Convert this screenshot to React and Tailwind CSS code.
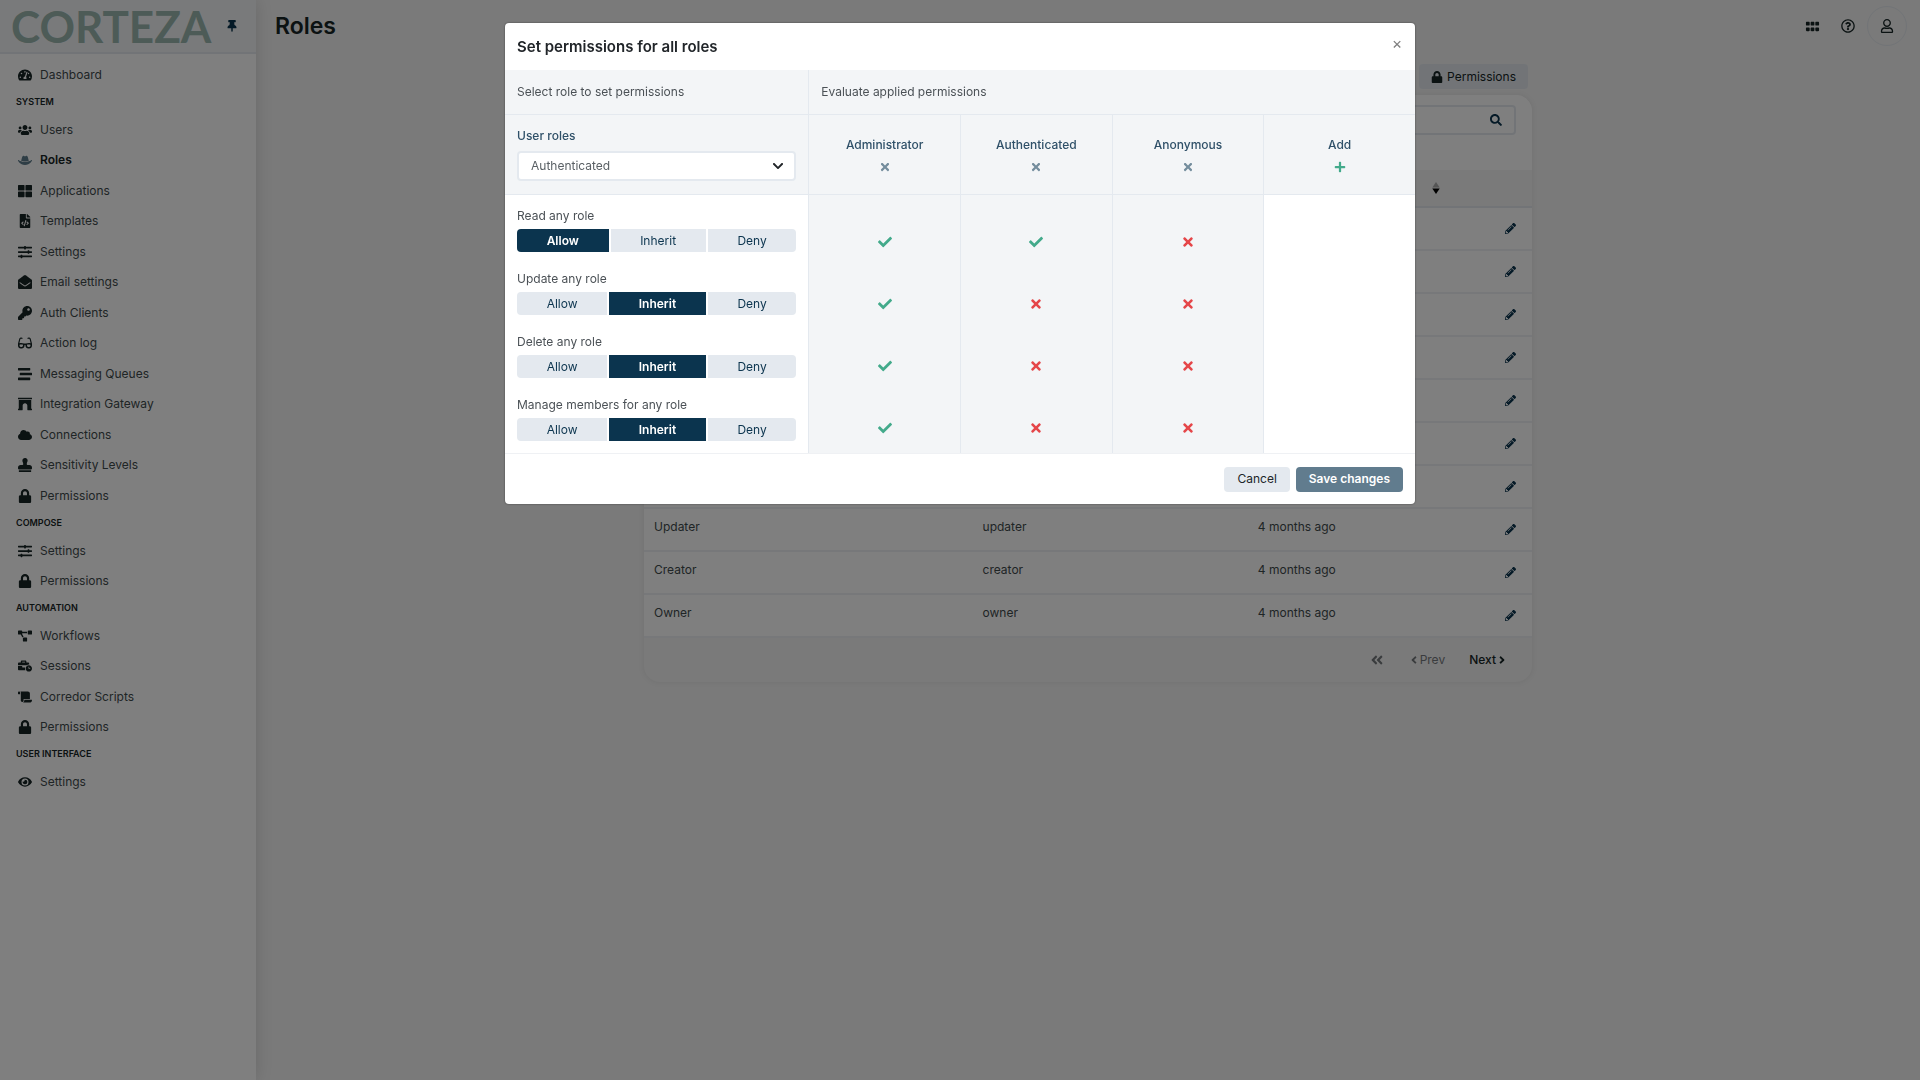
import React, { useState } from 'react';
import {
  FaTachometerAlt, FaUsers, FaHatCowboy, FaThLarge, FaFileCode, FaSlidersH, FaEnvelopeOpen, FaKey,
  FaGlasses, FaStream, FaArchway, FaCloud, FaStamp, FaLock, FaProjectDiagram, FaBusinessTime, FaScroll,
  FaEye, FaThumbtack, FaGripHorizontal, FaRegQuestionCircle, FaRegUser, FaSearch, FaPencilAlt,
  FaAngleDoubleLeft, FaAngleLeft, FaAngleRight, FaCheck, FaTimes, FaPlus, FaChevronDown,
} from 'react-icons/fa';

const NAV = [
  { title: null, items: [['Dashboard', FaTachometerAlt]] },
  {
    title: 'System',
    items: [
      ['Users', FaUsers], ['Roles', FaHatCowboy], ['Applications', FaThLarge], ['Templates', FaFileCode],
      ['Settings', FaSlidersH], ['Email settings', FaEnvelopeOpen], ['Auth Clients', FaKey],
      ['Action log', FaGlasses], ['Messaging Queues', FaStream], ['Integration Gateway', FaArchway],
      ['Connections', FaCloud], ['Sensitivity Levels', FaStamp], ['Permissions', FaLock],
    ],
  },
  { title: 'Compose', items: [['Settings', FaSlidersH], ['Permissions', FaLock]] },
  {
    title: 'Automation',
    items: [
      ['Workflows', FaProjectDiagram], ['Sessions', FaBusinessTime], ['Corredor Scripts', FaScroll],
      ['Permissions', FaLock],
    ],
  },
  { title: 'User interface', items: [['Settings', FaEye]] },
];

const ROWS = [
  ...Array.from({ length: 7 }, () => ['', '', '']),
  ['Updater', 'updater', '4 months ago'],
  ['Creator', 'creator', '4 months ago'],
  ['Owner', 'owner', '4 months ago'],
];

const RULES = ['Read any role', 'Update any role', 'Delete any role', 'Manage members for any role'];

const EVALUATED = [
  { name: 'Administrator', access: [true, true, true, true] },
  { name: 'Authenticated', access: [true, false, false, false] },
  { name: 'Anonymous', access: [false, false, false, false] },
];

function Sidebar() {
  return (
    <aside className="z-10 flex w-64 shrink-0 flex-col bg-white shadow-[0_0_16px_rgba(0,0,0,0.14)]">
      <div className="flex h-[54px] items-center border-b-2 border-[#e4e9ef] bg-[#f3f5f7] pl-[11px]">
        <span className="w-[215px] font-['Lato',sans-serif] text-[44px] leading-[52px] font-bold text-[#9ab6ae]">CORTEZA</span>
        <button type="button" aria-label="Pin sidebar" className="text-[#0b344e]">
          <FaThumbtack className="size-3" />
        </button>
      </div>
      <nav className="pt-[5px]">
        {NAV.map((group) => (
          <section key={group.title ?? 'home'}>
            {group.title && (
              <h2 className="flex h-6 items-center pl-4 text-[9px] font-semibold text-[#162425] uppercase">{group.title}</h2>
            )}
            <ul>
              {group.items.map(([label, Icon]) => {
                const active = label === 'Roles';
                return (
                  <li key={label} className="h-[31px] even:h-[30px]">
                    <a href="#" className={active ? 'flex h-full items-center gap-2 pl-[17px] font-semibold text-[#162425]' : 'flex h-full items-center gap-2 pl-[17px] text-[#3f4a4c]'}>
                      <span className={active ? 'flex w-[15px] justify-center text-[#5e7d8c]' : 'flex w-[15px] justify-center text-[#162425]'}>
                        <Icon className="size-3.5" />
                      </span>
                      {label}
                    </a>
                  </li>
                );
              })}
            </ul>
          </section>
        ))}
      </nav>
    </aside>
  );
}

function RolesPage() {
  return (
    <main className="flex grow flex-col bg-[#f4f4f4]">
      <header className="flex h-[52px] items-center justify-between pr-[13px] pl-[19px]">
        <h1 className="text-[23px] font-semibold text-[#162425]">Roles</h1>
        <div className="flex items-center text-[#162425]">
          <button type="button" aria-label="Applications" className="flex w-9 justify-center">
            <FaGripHorizontal className="size-[15px]" />
          </button>
          <button type="button" aria-label="Help" className="mr-px flex w-9 justify-center">
            <FaRegQuestionCircle className="size-3.5" />
          </button>
          <button type="button" aria-label="Profile" className="flex size-10 items-center justify-center rounded-full border border-[#e4e9ef]">
            <FaRegUser className="size-3.5" />
          </button>
        </div>
      </header>
      <div className="mx-auto w-full max-w-[888px] pt-3">
        <div className="mb-1.5 flex justify-end pr-1">
          <button type="button" className="flex h-[25px] items-center gap-1 rounded-sm bg-[#e4e9ef] px-3 text-[#162425]">
            <FaLock className="size-3" />
            Permissions
          </button>
        </div>
        <section className="overflow-hidden rounded-2xl bg-[#f4f4f4] shadow-[0_0_6px_rgba(0,0,0,0.08)]">
          <div className="flex h-[75px] justify-end bg-white px-4 pt-2.5">
            <label className="flex h-[30px] w-72 items-center justify-between rounded-sm border-2 border-[#e4e9ef] pr-3">
              <input type="search" aria-label="Search roles" className="w-full px-3 outline-none" />
              <FaSearch className="size-3 shrink-0 text-[#0b344e]" />
            </label>
          </div>
          <table className="w-full table-fixed bg-white text-left">
            <colgroup>
              <col className="w-[37%]" />
              <col className="w-[31%]" />
              <col />
              <col className="w-16" />
            </colgroup>
            <thead>
              <tr className="h-[37px] border-b-2 border-[#e4e9ef] bg-[#f4f4f4]">
                <th />
                <th />
                <th className="pr-7">
                  <button type="button" aria-label="Sort by date" className="ml-auto flex">
                    <svg viewBox="0 0 8 13" className="h-3 w-2">
                      <path d="M4 0 8 6H0z" fill="#000" opacity="0.3" />
                      <path d="M4 13 8 7H0z" fill="#000" />
                    </svg>
                  </button>
                </th>
                <th />
              </tr>
            </thead>
            <tbody>
              {ROWS.map((row, i) => (
                <tr key={i} className="h-[43px] border-b-2 border-[#eef1f5] text-[#3f4a4c]">
                  {row.map((cell, j) => (
                    <td key={j} className="px-2.5 pb-1.5">{cell}</td>
                  ))}
                  <td className="pr-4">
                    <button type="button" aria-label="Edit role" className="ml-auto flex text-[#0b344e]">
                      <FaPencilAlt className="size-[11px]" />
                    </button>
                  </td>
                </tr>
              ))}
            </tbody>
          </table>
          <footer className="flex h-11 items-center justify-end gap-6 pr-6">
            <button type="button" aria-label="First page" disabled className="text-[#74797c]">
              <FaAngleDoubleLeft className="size-3.5" />
            </button>
            <button type="button" disabled className="flex items-center text-[#74797c]">
              <FaAngleLeft className="size-3" />
              Prev
            </button>
            <button type="button" className="flex items-center font-medium text-[#162425]">
              Next
              <FaAngleRight className="size-3" />
            </button>
          </footer>
        </section>
      </div>
    </main>
  );
}

function AccessToggle({ label, value, onChange }) {
  return (
    <fieldset>
      <legend className="mb-1 leading-[18px]">{label}</legend>
      <div className="flex gap-0.5 overflow-hidden rounded-sm">
        {['Allow', 'Inherit', 'Deny'].map((option) => (
          <button
            key={option}
            type="button"
            aria-pressed={value === option}
            onClick={() => onChange(option)}
            className={value === option
              ? 'h-[23px] flex-auto bg-[#0b344e] text-center font-semibold text-white'
              : 'h-[23px] flex-auto bg-[#e4e9ef] text-center text-[#0b344e]'}
          >
            {option}
          </button>
        ))}
      </div>
    </fieldset>
  );
}

function PermissionsModal() {
  const [values, setValues] = useState(['Allow', 'Inherit', 'Inherit', 'Inherit']);
  return (
    <div className="fixed inset-0 z-20 flex items-start justify-center bg-black/50 pt-[23px]">
      <div role="dialog" aria-labelledby="modal-title" className="w-full max-w-[910px] overflow-hidden rounded-[4px] bg-white text-[#4b5156] shadow-[0_0_2px_rgba(0,0,0,0.5)]">
        <header className="flex h-[47px] items-center justify-between px-3">
          <h2 id="modal-title" className="text-[15px] font-semibold text-[#212529]">Set permissions for all roles</h2>
          <button type="button" aria-label="Close" className="mb-2 flex w-3 justify-center text-[16px] leading-5 text-[#808080]">×</button>
        </header>

        <div className="grid grid-cols-[2fr_4fr] border-b border-[#e4e9ef] bg-[#f3f5f7] leading-[44px]">
          <p className="px-3">Select role to set permissions</p>
          <p className="border-l border-[#e4e9ef] px-3">Evaluate applied permissions</p>
        </div>

        <div className="grid grid-cols-[2fr_1fr_1fr_1fr_1fr] border-b border-[#e4e9ef] bg-[#f3f5f7] text-[#2f5068]">
          <div className="px-3 pt-3 pb-[13px]">
            <label htmlFor="role" className="mb-1.5 block leading-[18px] font-medium">User roles</label>
            <div className="relative">
              <select id="role" className="h-[30px] w-full appearance-none rounded-sm border-2 border-[#e4e9ef] bg-white px-3 text-[#5a6065]">
                <option>Authenticated</option>
              </select>
              <FaChevronDown className="pointer-events-none absolute top-[9px] right-3 size-3 text-[#212529]" />
            </div>
          </div>
          {EVALUATED.map(({ name }) => (
            <div key={name} className="flex flex-col items-center justify-center gap-1 border-l border-[#e4e9ef] pt-0.5 font-medium">
              {name}
              <button type="button" aria-label={'Remove ' + name} className="flex h-[18px] items-center text-[#748d9d]">
                <FaTimes className="size-3" />
              </button>
            </div>
          ))}
          <div className="flex flex-col items-center justify-center gap-1 border-l border-[#e4e9ef] pt-0.5 font-medium">
            Add
            <button type="button" aria-label="Add role" className="flex h-[18px] items-center text-[#43aa8b]">
              <FaPlus className="size-3" />
            </button>
          </div>
        </div>

        <div className="grid grid-cols-[2fr_1fr_1fr_1fr_1fr] border-b border-[#eff1f4]">
          <div className="flex flex-col gap-[18px] p-3">
            {RULES.map((rule, i) => (
              <AccessToggle
                key={rule}
                label={rule}
                value={values[i]}
                onChange={(next) => setValues(values.map((v, j) => (j === i ? next : v)))}
              />
            ))}
          </div>
          {EVALUATED.map(({ name, access }) => (
            <div key={name} className="flex flex-col items-center gap-8 border-l border-[#e4e9ef] bg-[#f3f5f7] pt-8">
              {access.map((allowed, i) => (
                <span key={i} className="flex h-[30px] items-center">
                  {allowed
                    ? <FaCheck role="img" aria-label="Allowed" className="size-3.5 text-[#43aa8b]" />
                    : <FaTimes role="img" aria-label="Denied" className="size-3.5 text-[#e54649]" />}
                </span>
              ))}
            </div>
          ))}
          <div className="border-l border-[#e4e9ef]" />
        </div>

        <footer className="flex h-[50px] items-center justify-end gap-1.5 px-3">
          <button type="button" className="h-[25px] rounded-sm bg-[#e4e9ef] px-[13px] text-[#212529]">Cancel</button>
          <button type="button" className="h-[25px] rounded-sm bg-[#617c8e] px-[13px] font-semibold text-white">Save changes</button>
        </footer>
      </div>
    </div>
  );
}

export default function App() {
  return (
    <div className="flex min-h-screen font-['Inter',sans-serif] text-[12px] leading-[18px]">
      <Sidebar />
      <RolesPage />
      <PermissionsModal />
    </div>
  );
}
